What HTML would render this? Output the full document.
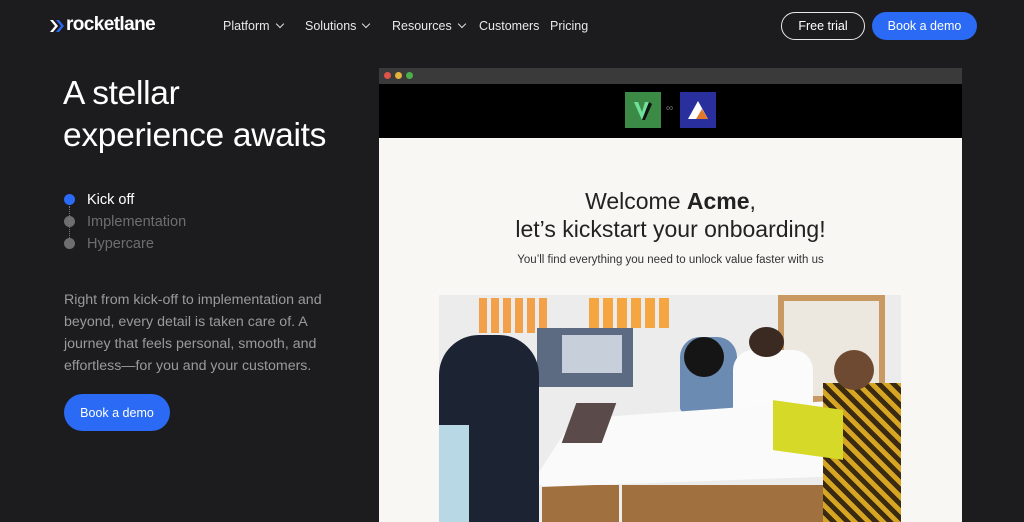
<!DOCTYPE html>
<html><head><meta charset="utf-8"><style>
*{margin:0;padding:0;box-sizing:border-box}
body{width:1024px;height:522px;overflow:hidden;background:#1c1c1e;font-family:"Liberation Sans",sans-serif;position:relative;color:#fff}
.a{position:absolute}
.nav{font-size:12.5px;color:#e8e8e8;top:19px}
.chev{display:inline-block;width:6px;height:6px;border-right:1.5px solid #ddd;border-bottom:1.5px solid #ddd;transform:rotate(45deg);margin-left:7px;position:relative;top:-3px}
.btn{border-radius:15px;font-size:12.5px;display:flex;align-items:center;justify-content:center}
.dot{width:11px;height:11px;border-radius:50%;left:64px}
</style></head><body>
<svg class="a" style="left:49px;top:19px" width="16" height="14"><path d="M1 1 L6 7 L1 13 L4 13 L9 7 L4 1Z" fill="#fff"/><path d="M7 1 L12 7 L7 13 L10 13 L15 7 L10 1Z" fill="#2a6af5"/></svg>
<div class="a" style="left:66px;top:14px;font-size:19px;font-weight:bold;letter-spacing:-0.6px">rocketlane</div>
<div class="a nav" style="left:223px">Platform<span class="chev"></span></div>
<div class="a nav" style="left:305px">Solutions<span class="chev"></span></div>
<div class="a nav" style="left:392px">Resources<span class="chev"></span></div>
<div class="a nav" style="left:479px">Customers</div>
<div class="a nav" style="left:550px">Pricing</div>
<div class="a btn" style="left:781px;top:12px;width:84px;height:28px;border:1.5px solid #e8e8e8;color:#fff">Free trial</div>
<div class="a btn" style="left:872px;top:12px;width:105px;height:28px;background:#2a6af5;color:#fff">Book a demo</div>

<div class="a" style="left:63px;top:73px;font-size:33.5px;line-height:42px;letter-spacing:-0.3px">A stellar<br>experience awaits</div>
<div class="a dot" style="top:194px;background:#2a6af5"></div>
<div class="a dot" style="top:216px;background:#6e6e70"></div>
<div class="a dot" style="top:238px;background:#6e6e70"></div>
<div class="a" style="left:69px;top:206px;height:32px;border-left:1px dotted #777"></div>
<div class="a" style="left:87px;top:189px;font-size:14.5px;line-height:22px;color:#6e6e70"><span style="color:#fff">Kick off</span><br>Implementation<br>Hypercare</div>
<div class="a" style="left:64px;top:289px;font-size:14.2px;line-height:22px;color:#9a9a9c;width:285px">Right from kick-off to implementation and beyond, every detail is taken care of. A journey that feels personal, smooth, and effortless—for you and your customers.</div>
<div class="a btn" style="left:64px;top:394px;width:106px;height:37px;border-radius:19px;background:#2a6af5">Book a demo</div>

<div class="a" style="left:379px;top:68px;width:583px;height:16px;background:#3a3a3a"></div>
<div class="a" style="left:384px;top:72px;width:7px;height:7px;border-radius:50%;background:#e0534a"></div>
<div class="a" style="left:395px;top:72px;width:7px;height:7px;border-radius:50%;background:#e2b23a"></div>
<div class="a" style="left:406px;top:72px;width:7px;height:7px;border-radius:50%;background:#4bb04a"></div>
<div class="a" style="left:379px;top:84px;width:583px;height:54px;background:#000"></div>
<div class="a" style="left:625px;top:92px;width:36px;height:36px;background:#3b8a45"><svg width="36" height="36"><path d="M9 10 L17 28 L24 10 L20 10 L17 20 L13 10Z" fill="#6ee09a"/><path d="M17 28 L24 10 L27 12 L20 28Z" fill="#111"/></svg></div>
<div class="a" style="left:666px;top:103px;font-size:10px;color:#777">∞</div>
<div class="a" style="left:680px;top:92px;width:36px;height:36px;background:#2a2f9e"><svg width="36" height="36"><path d="M18 9 L28 27 L8 27Z" fill="#fff"/><path d="M22 17 L28 27 L16 27Z" fill="#e07a2a"/></svg></div>
<div class="a" style="left:379px;top:138px;width:583px;height:384px;background:#f8f7f3"></div>
<div class="a" style="left:379px;top:187px;width:583px;text-align:center;color:#222;font-size:23px;line-height:28px">Welcome <b>Acme</b>,<br>let’s kickstart your onboarding!</div>
<div class="a" style="left:379px;top:254px;width:583px;text-align:center;color:#333;font-size:11.5px">You’ll find everything you need to unlock value faster with us</div>

<div class="a" style="left:439px;top:295px;width:462px;height:227px;background:#ececec;overflow:hidden">
 <div class="a" style="left:0;top:190px;width:462px;height:37px;background:#a0703f"></div>
 <div class="a" style="left:339px;top:0;width:107px;height:108px;background:#c89a62"></div>
 <div class="a" style="left:345px;top:6px;width:95px;height:95px;background:#ece7df"></div>
 <div class="a" style="left:40px;top:3px;width:70px;height:35px;background:repeating-linear-gradient(90deg,#f2a04a 0 8px,transparent 8px 12px)"></div>
 <div class="a" style="left:150px;top:3px;width:80px;height:30px;background:repeating-linear-gradient(90deg,#f5a640 0 10px,transparent 10px 14px)"></div>
 <div class="a" style="left:98px;top:33px;width:96px;height:59px;background:#5d6b82"></div>
 <div class="a" style="left:123px;top:40px;width:60px;height:38px;background:#c7cfdb"></div>
 <div class="a" style="left:241px;top:42px;width:57px;height:75px;background:#6b8bb2;border-radius:20px 20px 4px 4px"></div>
 <div class="a" style="left:245px;top:42px;width:40px;height:40px;background:#151515;border-radius:50%"></div>
 <div class="a" style="left:294px;top:55px;width:80px;height:72px;background:#fbfbfb;border-radius:20px 20px 4px 4px"></div>
 <div class="a" style="left:310px;top:32px;width:35px;height:30px;background:#3a2a22;border-radius:50%"></div>
 <div class="a" style="left:90px;top:105px;width:370px;height:95px;background:#fafafa;clip-path:polygon(12% 20%,85% 0,100% 78%,0 92%)"></div>
 <div class="a" style="left:100px;top:190px;width:3px;height:37px;background:#eee"></div>
 <div class="a" style="left:180px;top:190px;width:3px;height:37px;background:#eee"></div>
 <div class="a" style="left:0;top:40px;width:100px;height:187px;background:#1c2333;border-radius:40px 40px 0 0"></div>
 <div class="a" style="left:0;top:130px;width:30px;height:97px;background:#b9d8e6"></div>
 <div class="a" style="left:384px;top:88px;width:79px;height:139px;background:#3b2a12;background-image:repeating-linear-gradient(45deg,#d6a521 0 5px,#3b2a12 5px 10px)"></div>
 <div class="a" style="left:395px;top:55px;width:40px;height:40px;background:#6e4a32;border-radius:50%"></div>
 <div class="a" style="left:334px;top:110px;width:70px;height:50px;background:#d7d928;transform:skewY(8deg)"></div>
 <div class="a" style="left:130px;top:108px;width:40px;height:40px;background:#5a4a4a;transform:skewX(-20deg)"></div>
</div>
</body></html>
